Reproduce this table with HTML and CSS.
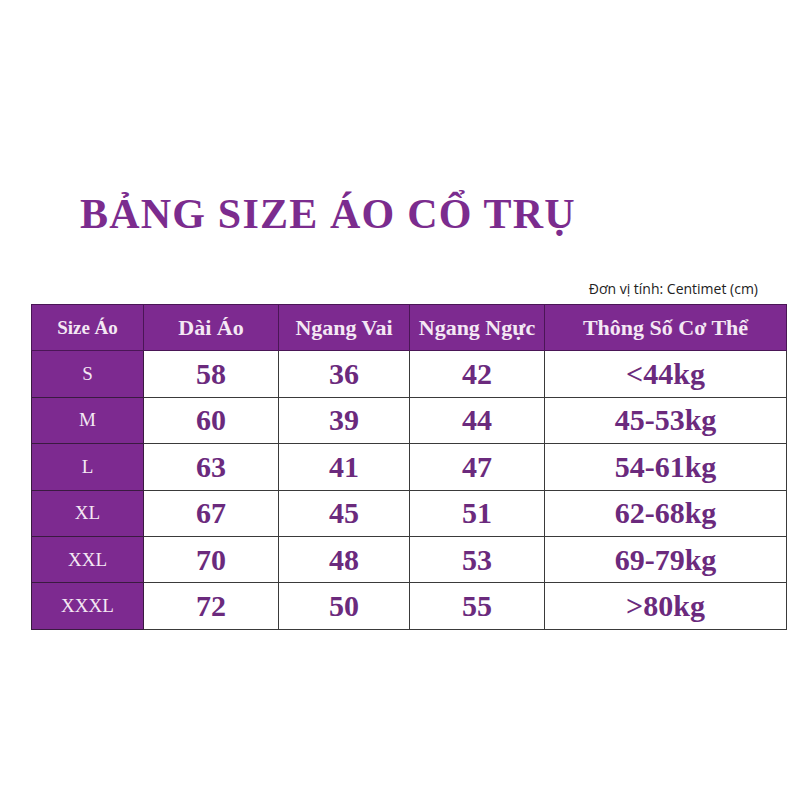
FILE: index.html
```html
<!DOCTYPE html>
<html lang="vi">
<head>
<meta charset="utf-8">
<title>Bảng size áo cổ trụ</title>
<link rel="stylesheet" href="styles.css">
</head>
<body>
<div class="page">
  <h1 class="title">BẢNG SIZE ÁO CỔ TRỤ</h1>
  <div class="unit">Đơn vị tính: Centimet (cm)</div>
  <table class="size-table">
    <colgroup>
      <col class="c1"><col class="c2"><col class="c3"><col class="c4"><col class="c5">
    </colgroup>
    <thead>
      <tr>
        <th class="first">Size Áo</th>
        <th>Dài Áo</th>
        <th>Ngang Vai</th>
        <th>Ngang Ngực</th>
        <th>Thông Số Cơ Thể</th>
      </tr>
    </thead>
    <tbody>
      <tr><th>S</th><td>58</td><td>36</td><td>42</td><td>&lt;44kg</td></tr>
      <tr><th>M</th><td>60</td><td>39</td><td>44</td><td>45-53kg</td></tr>
      <tr><th>L</th><td>63</td><td>41</td><td>47</td><td>54-61kg</td></tr>
      <tr><th>XL</th><td>67</td><td>45</td><td>51</td><td>62-68kg</td></tr>
      <tr><th>XXL</th><td>70</td><td>48</td><td>53</td><td>69-79kg</td></tr>
      <tr><th>XXXL</th><td>72</td><td>50</td><td>55</td><td>&gt;80kg</td></tr>
    </tbody>
  </table>
</div>
</body>
</html>
```

FILE: styles.css
```css
html, body {
  margin: 0;
  padding: 0;
  background: #ffffff;
}

.page {
  width: 800px;
  height: 800px;
  padding-top: 193px;
  box-sizing: border-box;
}

.title {
  margin: 0;
  padding-left: 80px;
  font-family: "Liberation Serif", "Times New Roman", serif;
  font-weight: bold;
  font-size: 42px;
  line-height: 42px;
  letter-spacing: 1.2px;
  color: #7b2c8e;
  white-space: nowrap;
}

.unit {
  margin-top: 46px;
  padding-right: 42px;
  text-align: right;
  font-family: "Open Sans", "Liberation Sans", sans-serif;
  font-size: 14px;
  line-height: 16px;
  color: #222222;
}

.size-table {
  margin-top: 7px;
  margin-left: 31px;
  width: 755px;
  border-collapse: collapse;
  table-layout: fixed;
  font-family: "Liberation Serif", "Times New Roman", serif;
}

.c1 { width: 112px; }
.c2 { width: 135px; }
.c3 { width: 131px; }
.c4 { width: 135px; }
.c5 { width: 242px; }

.size-table th,
.size-table td {
  border: 1px solid #3a3a3a;
  height: 45.4px;
  padding: 0;
  text-align: center;
  vertical-align: middle;
  white-space: nowrap;
}

.size-table thead th {
  background: #7d2a90;
  color: #f4e8f4;
  font-weight: bold;
  font-size: 22px;
  border-color: #4a1656;
}

.size-table thead th.first {
  font-size: 19px;
}

.size-table tbody th {
  background: #7d2a90;
  color: #f4e8f4;
  font-weight: normal;
  font-size: 19px;
  border-color: #3a1a40;
}

.size-table tbody td {
  background: #ffffff;
  color: #6b2a7d;
  font-weight: bold;
  font-size: 30px;
  line-height: 30px;
}
```
